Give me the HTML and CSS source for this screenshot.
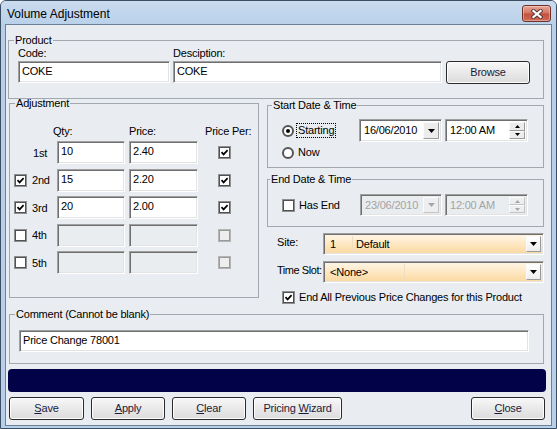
FILE: index.html
```html
<!DOCTYPE html>
<html lang="en">
<head>
    <meta charset="UTF-8">
    <title>Volume Adjustment</title>
    <link rel="stylesheet" href="styles.css">
</head>
<body>
<div class="window">
    <div class="titlebar">
        <span class="title">Volume Adjustment</span>
        <div class="close_x">
            <svg width="12" height="10" viewBox="0 0 12 10"><path d="M2.5 2L9.5 8M9.5 2L2.5 8" stroke="#5a3a36" stroke-width="4.2" stroke-linecap="square"/><path d="M2.5 2L9.5 8M9.5 2L2.5 8" stroke="#fff" stroke-width="2.3" stroke-linecap="square"/></svg>
        </div>
    </div>
    <div class="client">
        <!-- product -->
        <fieldset class="group product">
            <legend>Product</legend>
            <div class="pad_product">
                <div class="field code">
                    <label>Code:</label>
                    <div class="edit">COKE</div>
                </div>
                <div class="field desc">
                    <label>Desciption:</label>
                    <div class="edit">COKE</div>
                </div>
                <div class="btn browse">Browse</div>
            </div>
        </fieldset>

        <div class="middle">
            <!-- adjustment -->
            <fieldset class="group adjust">
                <legend>Adjustment</legend>
                <div class="pad_adj">
                    <div class="adj_head">
                        <span class="h_qty">Qty:</span><span class="h_price">Price:</span><span class="h_per">Price Per:</span>
                    </div>
                    <div class="adj_rows">
                        <div class="adj_row">
                            <span class="chk_space"></span><span class="rlabel first">1st</span>
                            <div class="edit qty">10</div><div class="edit price">2.40</div>
                            <span class="chk per"><svg width="9" height="9" viewBox="0 0 9 9"><path d="M1.5 4.2L3.6 6.4L7.6 2.2" fill="none" stroke="#000" stroke-width="1.7"/></svg></span>
                        </div>
                        <div class="adj_row">
                            <span class="chk"><svg width="9" height="9" viewBox="0 0 9 9"><path d="M1.5 4.2L3.6 6.4L7.6 2.2" fill="none" stroke="#000" stroke-width="1.7"/></svg></span><span class="rlabel">2nd</span>
                            <div class="edit qty">15</div><div class="edit price">2.20</div>
                            <span class="chk per"><svg width="9" height="9" viewBox="0 0 9 9"><path d="M1.5 4.2L3.6 6.4L7.6 2.2" fill="none" stroke="#000" stroke-width="1.7"/></svg></span>
                        </div>
                        <div class="adj_row">
                            <span class="chk"><svg width="9" height="9" viewBox="0 0 9 9"><path d="M1.5 4.2L3.6 6.4L7.6 2.2" fill="none" stroke="#000" stroke-width="1.7"/></svg></span><span class="rlabel">3rd</span>
                            <div class="edit qty">20</div><div class="edit price">2.00</div>
                            <span class="chk per"><svg width="9" height="9" viewBox="0 0 9 9"><path d="M1.5 4.2L3.6 6.4L7.6 2.2" fill="none" stroke="#000" stroke-width="1.7"/></svg></span>
                        </div>
                        <div class="adj_row">
                            <span class="chk"></span><span class="rlabel">4th</span>
                            <div class="edit qty dis"></div><div class="edit price dis"></div>
                            <span class="chk per dis"></span>
                        </div>
                        <div class="adj_row">
                            <span class="chk"></span><span class="rlabel">5th</span>
                            <div class="edit qty dis"></div><div class="edit price dis"></div>
                            <span class="chk per dis"></span>
                        </div>
                    </div>
                </div>
            </fieldset>

            <div class="right_col">
                <fieldset class="group start">
                    <legend>Start Date &amp; Time</legend>
                    <div class="pad_start">
                        <div class="dt_row">
                            <div class="opt">
                                <span class="radio on"></span><span class="opt_label focus">Starting</span>
                            </div>
                            <div class="combo date">
                                <span class="val">16/06/2010</span>
                                <span class="drop"><svg width="7" height="4" viewBox="0 0 7 4"><path d="M0 0H7L3.5 4Z" fill="#000"/></svg></span>
                            </div>
                            <div class="combo time">
                                <span class="val">12:00 AM</span>
                                <span class="spin">
                                    <span><svg width="5" height="3" viewBox="0 0 5 3"><path d="M0 3H5L2.5 0Z" fill="#000"/></svg></span>
                                    <span><svg width="5" height="3" viewBox="0 0 5 3"><path d="M0 0H5L2.5 3Z" fill="#000"/></svg></span>
                                </span>
                            </div>
                        </div>
                        <div class="now_row">
                            <span class="radio"></span><span class="opt_label">Now</span>
                        </div>
                    </div>
                </fieldset>

                <fieldset class="group end">
                    <legend>End Date &amp; Time</legend>
                    <div class="pad_end">
                        <div class="dt_row">
                            <div class="opt">
                                <span class="chk"></span><span class="cb_label">Has End</span>
                            </div>
                            <div class="combo date off">
                                <span class="val">23/06/2010</span>
                                <span class="drop"><svg width="7" height="4" viewBox="0 0 7 4"><path d="M0 0H7L3.5 4Z" fill="#a7a7a7"/></svg></span>
                            </div>
                            <div class="combo time off">
                                <span class="val">12:00 AM</span>
                                <span class="spin">
                                    <span><svg width="5" height="3" viewBox="0 0 5 3"><path d="M0 3H5L2.5 0Z" fill="#a7a7a7"/></svg></span>
                                    <span><svg width="5" height="3" viewBox="0 0 5 3"><path d="M0 0H5L2.5 3Z" fill="#a7a7a7"/></svg></span>
                                </span>
                            </div>
                        </div>
                    </div>
                </fieldset>

                <div class="sel_row">
                    <span class="sel_label">Site:</span>
                    <div class="select">
                        <span class="c1">1</span><span class="c2">Default</span>
                        <span class="drop"><svg width="7" height="4" viewBox="0 0 7 4"><path d="M0 0H7L3.5 4Z" fill="#000"/></svg></span>
                    </div>
                </div>
                <div class="sel_row">
                    <span class="sel_label tight">Time Slot:</span>
                    <div class="select">
                        <span class="c1 wide">&lt;None&gt;</span><span class="c2"></span>
                        <span class="drop"><svg width="7" height="4" viewBox="0 0 7 4"><path d="M0 0H7L3.5 4Z" fill="#000"/></svg></span>
                    </div>
                </div>
                <div class="endall">
                    <span class="chk"><svg width="9" height="9" viewBox="0 0 9 9"><path d="M1.5 4.2L3.6 6.4L7.6 2.2" fill="none" stroke="#000" stroke-width="1.7"/></svg></span>
                    <span class="cb_label">End All Previous Price Changes for this Product</span>
                </div>
            </div>
        </div>

        <!-- comment -->
        <fieldset class="group comment">
            <legend>Comment (Cannot be blank)</legend>
            <div class="pad_comment">
                <div class="edit">Price Change 78001</div>
            </div>
        </fieldset>

        <div class="status_bar"></div>

        <div class="buttons">
            <div class="btn save"><u>S</u>ave</div>
            <div class="btn apply"><u>A</u>pply</div>
            <div class="btn clear"><u>C</u>lear</div>
            <div class="btn wizard">Pricing <u>W</u>izard</div>
            <div class="btn close"><u>C</u>lose</div>
        </div>
    </div>
</div>
</body>
</html>
```

FILE: styles.css
```css
*{
    box-sizing: border-box;
}
body{
    margin: 0;
    font-family: "Liberation Sans", Arial, sans-serif;
    font-size: 11px;
    letter-spacing: -0.2px;
    color: #000;
    background: #fff;
    white-space: nowrap;
}
.window{
    width: 557px;
    height: 429px;
    border: 1px solid #3c4e64;
    border-radius: 6px 6px 0 0;
    background: #b7cfe9;
    overflow: hidden;
}
    .titlebar{
        height: 23px;
        display: flex;
        justify-content: space-between;
        align-items: flex-start;
        background: linear-gradient(#cadbee, #b9d1ea);
    }
        .title{
            font-size: 12px;
            line-height: 14px;
            letter-spacing: 0;
            margin: 6px 0 0 6px;
            color: #000;
        }
        .close_x{
            width: 29px;
            height: 17px;
            margin: 4px 5px 0 0;
            border: 1px solid #6e3029;
            border-radius: 3px;
            background: linear-gradient(#e8a697, #d27462 48%, #c4503c 52%, #cf6b57);
            box-shadow: inset 0 0 0 1px rgba(255,255,255,.35);
            display: flex;
            align-items: center;
            justify-content: center;
        }
    .client{
        height: 402px;
        margin: 0 4px;
        border: 1px solid #6c7f96;
        padding: 9px 0 0 2px;
        background: #e9edf1;
    }

/* group boxes */
.group{
    margin: 0;
    padding: 0;
    min-width: 0;
    border: 1px solid #a3a8ae;
}
    .group legend{
        padding: 0 1px;
        margin-left: 5px;
        line-height: 12px;
    }

/* common controls */
.edit{
    height: 22px;
    border: 1px solid;
    border-color: #a0a0a0 #fff #fff #a0a0a0;
    box-shadow: inset 1px 1px 0 #6f6f6f, inset -1px -1px 0 #e3e3e3;
    background: #fff;
    padding: 1px 3px 0;
    line-height: 16px;
    overflow: hidden;
}
    .edit.dis{
        background: #eaedf0;
    }
.chk{
    width: 13px;
    height: 13px;
    flex: none;
    border: 1px solid #8e8f90;
    box-shadow: inset 0 0 0 1px #505050;
    background: #fff;
    display: flex;
    align-items: center;
    justify-content: center;
}
    .chk.dis{
        border-color: #b4b4b4;
        box-shadow: inset 0 0 0 1px #9a9a9a;
        background: #eeeeee;
    }
.radio{
    width: 12px;
    height: 12px;
    flex: none;
    border-radius: 50%;
    border: 2px solid #555;
    background: #fff;
    display: flex;
    align-items: center;
    justify-content: center;
}
    .radio.on::after{
        content: "";
        width: 4px;
        height: 4px;
        border-radius: 50%;
        background: #000;
    }
.btn{
    height: 23px;
    border: 1px solid #2a2a2a;
    border-radius: 3px;
    background: linear-gradient(#f8f8f8, #e9e9e9 50%, #dcdcdc);
    box-shadow: inset 0 0 0 1px #fdfdfd;
    color: #1b1b3c;
    text-align: center;
    line-height: 21px;
}

/* product */
.product{
    width: 536px;
}
    .pad_product{
        display: flex;
        align-items: flex-start;
        padding: 1px 0 14px 9px;
    }
        .field label{
            display: block;
            line-height: 13px;
            margin-bottom: 1px;
        }
        .code .edit{
            width: 152px;
        }
        .desc{
            margin-left: 3px;
        }
            .desc .edit{
                width: 269px;
            }
        .browse{
            width: 84px;
            margin: 14px 0 0 4px;
        }

/* middle part */
.middle{
    display: flex;
    align-items: flex-start;
    margin-top: -2px;
}
    .adjust{
        width: 250px;
        margin-left: 1px;
    }
        .pad_adj{
            padding: 16px 0 23px 4px;
        }
            .adj_head{
                display: flex;
                line-height: 13px;
            }
                .h_qty{
                    margin-left: 39px;
                    width: 76px;
                }
                .h_price{
                    width: 76px;
                }
            .adj_rows{
                margin-top: 3px;
                display: flex;
                flex-direction: column;
                gap: 4.5px;
            }
                .adj_row{
                    display: flex;
                    align-items: center;
                    height: 23px;
                }
                    .adj_row .edit{
                        height: 23px;
                    }
                    .chk_space{
                        width: 13px;
                    }
                    .rlabel{
                        width: 30px;
                        padding-left: 5px;
                    }
                    .rlabel.first{
                        padding-left: 6px;
                    }
                    .qty{
                        width: 68px;
                    }
                    .price{
                        width: 69px;
                        margin-left: 4px;
                    }
                    .chk.per{
                        margin-left: 20px;
                    }

    .right_col{
        width: 277px;
        margin: 2px 0 0 8px;
    }
        .start legend{
            margin-left: 4px;
        }
        .end legend{
            margin-left: 2px;
        }
        .pad_start{
            padding: 8px 0 8px 14px;
        }
        .end{
            margin-top: 5px;
        }
        .pad_end{
            padding: 9px 0 10px 14px;
        }
            .dt_row{
                display: flex;
                align-items: center;
            }
                .opt{
                    width: 77px;
                    display: flex;
                    align-items: center;
                }
                .opt_label{
                    margin-left: 3px;
                    padding: 0 1px;
                    line-height: 13px;
                }
                .opt_label.focus{
                    outline: 1px dotted #000;
                }
                .cb_label{
                    margin-left: 4px;
                    line-height: 13px;
                }
            .now_row{
                display: flex;
                align-items: center;
                margin-top: 4px;
                height: 13px;
            }

            .combo{
                height: 23px;
                display: flex;
                border: 1px solid;
                border-color: #a0a0a0 #fff #fff #a0a0a0;
                box-shadow: inset 1px 1px 0 #6f6f6f, inset -1px -1px 0 #e3e3e3;
                background: #fff;
                padding: 2px;
            }
            .pad_end .combo{
                height: 22px;
            }
                .combo .val{
                    flex: 1;
                    padding-left: 2px;
                    line-height: 16px;
                }
                .combo .drop{
                    width: 16px;
                    border: 1px solid;
                    border-color: #fbfbfb #9a9a9a #9a9a9a #fbfbfb;
                    background: #ececec;
                    display: flex;
                    align-items: center;
                    justify-content: center;
                }
                .combo .spin{
                    width: 16px;
                    display: flex;
                    flex-direction: column;
                }
                    .spin span{
                        flex: 1;
                        border: 1px solid;
                        border-color: #fbfbfb #9a9a9a #9a9a9a #fbfbfb;
                        background: #ececec;
                        display: flex;
                        align-items: center;
                        justify-content: center;
                    }
            .combo.date{
                width: 83px;
            }
            .pad_end .combo.date{
                width: 82px;
                margin-left: 1px;
            }
            .combo.time{
                width: 83px;
                margin-left: 3px;
            }
            .combo.off{
                background: #eaedf0;
                color: #a3a3a3;
            }
                .combo.off .drop,
                .combo.off .spin span{
                    background: #eceef0;
                    border-color: #fbfbfb #c4c4c4 #c4c4c4 #fbfbfb;
                }

        .sel_row{
            display: flex;
            align-items: center;
            margin-top: 6px;
            padding-left: 10px;
        }
            .sel_label{
                width: 46px;
                flex: none;
                line-height: 13px;
                padding-bottom: 4px;
            }
            .sel_label.tight{
                letter-spacing: -0.45px;
            }
            .select{
                width: 222px;
                height: 22px;
                display: flex;
                border: 1px solid;
                border-color: #a0a0a0 #fff #fff #a0a0a0;
                box-shadow: inset 1px 1px 0 #6f6f6f, inset -1px -1px 0 #e3e3e3;
                background: linear-gradient(#fff6e9, #fde6bf 55%, #fbd89f);
                padding: 2px;
                line-height: 16px;
            }
                .select .c1{
                    width: 27px;
                    padding-left: 4px;
                    border-right: 1px solid #f1dcc0;
                }
                .select .c1.wide{
                    width: 79px;
                }
                .select .c2{
                    flex: 1;
                    padding-left: 3px;
                }
                .select .drop{
                    width: 15px;
                    border: 1px solid;
                    border-color: #fbfbfb #9a9a9a #9a9a9a #fbfbfb;
                    background: linear-gradient(#ffffff, #ececec);
                    display: flex;
                    align-items: center;
                    justify-content: center;
                }
        .endall{
            display: flex;
            align-items: center;
            margin-top: 8px;
            padding-left: 15px;
        }

/* comment */
.comment{
    width: 535px;
    margin: 4px 0 0 1px;
}
    .pad_comment{
        padding: 10px 0 11px 9px;
    }
        .pad_comment .edit{
            width: 510px;
        }

.status_bar{
    width: 538px;
    height: 23px;
    margin-top: 5px;
    border-radius: 4px;
    background: #020248;
}

.buttons{
    display: flex;
    margin-top: 5px;
}
    .save{
        width: 75px;
        margin-left: 1px;
    }
    .apply,
    .clear{
        width: 74px;
        margin-left: 7px;
    }
    .wizard{
        width: 89px;
        margin-left: 7px;
    }
    .close{
        width: 74px;
        margin-left: auto;
        margin-right: 6px;
    }
```
